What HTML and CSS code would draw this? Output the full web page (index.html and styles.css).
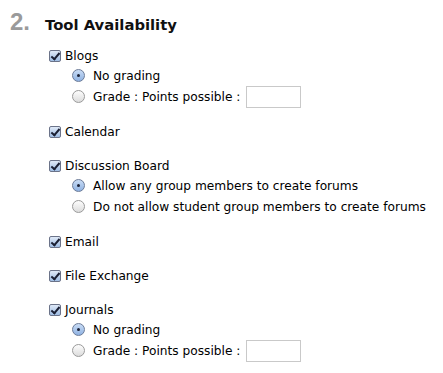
FILE: index.html
```html
<!DOCTYPE html>
<html lang="en">
<head>
    <meta charset="UTF-8">
    <title>Tool Availability</title>
    <link rel="stylesheet" href="styles.css">
</head>
<body>
    <div class="step">
        <div class="step-head">
            <span class="step-num">2.</span>
            <span class="step-title">Tool Availability</span>
        </div>

        <ul class="tools">
            <li class="tool">
                <label class="row"><span class="check"></span>Blogs</label>
                <div class="opts">
                    <label class="row"><span class="radio on"></span>No grading</label>
                    <label class="row"><span class="radio"></span>Grade : Points possible :<span class="points"></span></label>
                </div>
            </li>
            <li class="tool">
                <label class="row"><span class="check"></span>Calendar</label>
            </li>
            <li class="tool">
                <label class="row"><span class="check"></span>Discussion Board</label>
                <div class="opts">
                    <label class="row"><span class="radio on"></span>Allow any group members to create forums</label>
                    <label class="row"><span class="radio"></span>Do not allow student group members to create forums</label>
                </div>
            </li>
            <li class="tool">
                <label class="row"><span class="check"></span>Email</label>
            </li>
            <li class="tool">
                <label class="row"><span class="check"></span>File Exchange</label>
            </li>
            <li class="tool">
                <label class="row"><span class="check"></span>Journals</label>
                <div class="opts">
                    <label class="row"><span class="radio on"></span>No grading</label>
                    <label class="row"><span class="radio"></span>Grade : Points possible :<span class="points"></span></label>
                </div>
            </li>
        </ul>
    </div>
</body>
</html>
```

FILE: styles.css
```css
* {
    margin: 0;
    padding: 0;
    box-sizing: border-box;
}

body {
    font-family: 'DejaVu Sans', sans-serif;
    font-size: 12.2px;
    color: #000;
    background: #fff;
}

.step {
    padding: 8px 0 0 10px;
}

.step-head {
    display: flex;
    align-items: baseline;
    gap: 15px;
    height: 22px;
}

.step-num {
    font-family: 'Liberation Sans', sans-serif;
    font-weight: bold;
    font-size: 24px;
    color: #9a9a9a;
}

.step-title {
    font-family: 'DejaVu Sans', sans-serif;
    font-weight: bold;
    font-size: 14.8px;
    color: #111;
}

.tools {
    list-style: none;
    margin: 16px 0 0 39px;
}

.tool {
    margin-bottom: 15px;
}

.tool.spaced {
    margin-bottom: 17px;
}

.row {
    display: flex;
    align-items: center;
    gap: 4px;
    height: 19px;
}

.opts {
    padding-left: 23px;
}

.opts .row {
    gap: 8px;
    height: 21px;
}

.check {
    position: relative;
    width: 12px;
    height: 12px;
    border: 1px solid #6b7389;
    border-radius: 2px;
    background: linear-gradient(#dfe9f7, #9fbde4);
    flex-shrink: 0;
}

.check::after {
    content: '';
    position: absolute;
    left: 3px;
    top: 0px;
    width: 3px;
    height: 7px;
    border: solid #1a1f33;
    border-width: 0 2px 2px 0;
    transform: rotate(40deg);
}

.radio {
    position: relative;
    width: 13px;
    height: 13px;
    border: 1px solid #9a9a9a;
    border-radius: 50%;
    background: linear-gradient(#fdfdfd, #dcdcdc);
    flex-shrink: 0;
}

.radio.on {
    border-color: #6b7b98;
    background: linear-gradient(#c9dcf5, #8fb2e2);
}

.radio.on::after {
    content: '';
    position: absolute;
    left: 4px;
    top: 4px;
    width: 3px;
    height: 3px;
    border-radius: 50%;
    background: #1b2236;
}

.points {
    width: 55px;
    height: 22px;
    border: 1px solid #c9c9c9;
    margin-left: -2px;
    background: #fff;
}
```
